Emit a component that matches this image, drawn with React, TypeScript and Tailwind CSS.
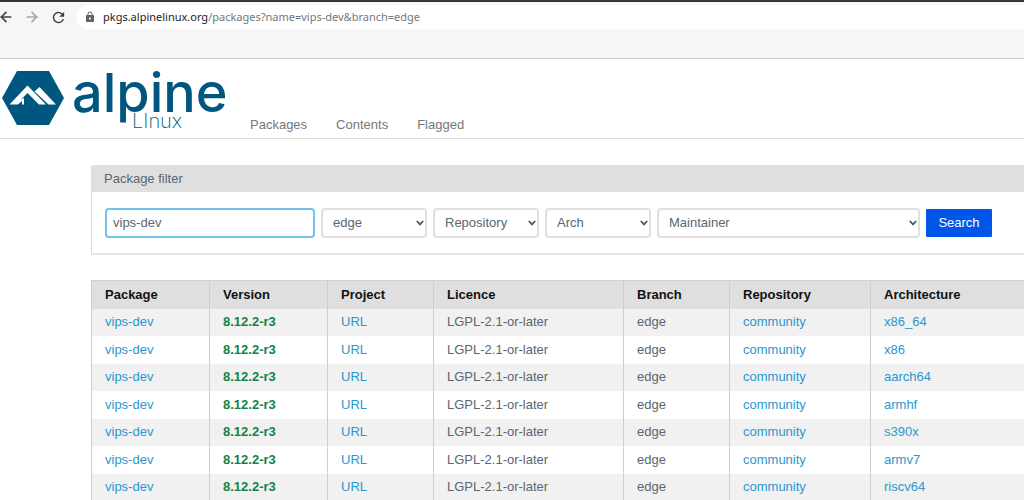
import { ArrowLeft, ArrowRight } from "lucide-react";
import { MdLock, MdRefresh } from "react-icons/md";

const navItems = ["Packages", "Contents", "Flagged"];

const columns = [
  { name: "Package", width: "w-[118px]" },
  { name: "Version", width: "w-[118px]" },
  { name: "Project", width: "w-[106px]" },
  { name: "Licence", width: "w-[190px]" },
  { name: "Branch", width: "w-[106px]" },
  { name: "Repository", width: "w-[141px]" },
  { name: "Architecture", width: "" },
];

const architectures = ["x86_64", "x86", "aarch64", "armhf", "s390x", "armv7", "riscv64"];

type FilterSelectProps = {
  label: string;
  value: string;
  className: string;
};

function FilterSelect({ label, value, className }: FilterSelectProps) {
  return (
    <div className={`relative ${className}`}>
      <select
        aria-label={label}
        className="h-[30px] w-full appearance-none rounded-[4px] border-2 border-[#e0e0e0] bg-white pl-[10px] pr-5 text-[13px] text-[#5b666e]"
      >
        <option>{value}</option>
      </select>
      <svg
        viewBox="0 0 8 6"
        className="pointer-events-none absolute right-[3px] top-3 h-[6px] w-2"
        fill="none"
        stroke="#4a555f"
        strokeWidth="1.8"
      >
        <path d="M0.8 1 L4 4.4 L7.2 1" />
      </svg>
    </div>
  );
}

function BrowserBar() {
  return (
    <div className="h-[59px] border-b border-t-2 border-b-[#cfcfcf] border-t-[#3a3435] bg-[#f6f6f6] pt-[3px]">
      <div className="flex items-center">
        <div className="flex w-[76px] items-center gap-[10px] text-[#3f4346]">
          <button aria-label="Back" className="-ml-0.5">
            <ArrowLeft className="h-4 w-4" strokeWidth={2.6} />
          </button>
          <button aria-label="Forward" className="text-[#a3a7a9]">
            <ArrowRight className="h-4 w-4" strokeWidth={2.6} />
          </button>
          <button aria-label="Reload">
            <MdRefresh className="h-[17px] w-[17px]" />
          </button>
        </div>
        <div className="flex h-6 flex-1 items-center gap-[7px] rounded-l-full bg-white pl-2 font-['Noto_Sans',sans-serif] text-[11px] text-[#73777a]">
          <MdLock className="h-3 w-3 text-[#5f6367]" />
          <span className="whitespace-nowrap">
            <span className="text-[#222426]">pkgs.alpinelinux.org</span>/packages?name=vips-dev&amp;branch=edge
          </span>
        </div>
      </div>
    </div>
  );
}

function Logo() {
  return (
    <a href="#" className="flex font-['Inter',sans-serif] text-[#00567f]" aria-label="Alpine Linux">
      <svg viewBox="0 0 62 54" className="mt-3 h-[54px] w-[62px]">
        <path d="M15 0 H47 L62 27 L47 54 H15 L0 27 Z" fill="currentColor" />
        <path
          d="M7.5 33.5 L25.5 14.5 L44 33.5 H37 L25.5 22 L19 28.5 L22 27 V33.5 H20 V30 L16 33.5 Z"
          fill="#fff"
        />
        <path d="M32.5 20.5 L37.5 16 L54 33.5 H46.5 L37.5 25 Z" fill="#fff" />
      </svg>
      <span className="relative ml-2 block w-[155px] text-[54px] font-medium leading-[68px]">
        alpine
        <span className="absolute left-[60px] top-[52px] text-[20px] font-extralight leading-5">LInux</span>
      </span>
    </a>
  );
}

export default function App() {
  return (
    <div className="h-screen overflow-hidden bg-white font-['Liberation_Sans',Arial,sans-serif] text-[13px] text-[#5b666e]">
      <BrowserBar />

      <header className="flex h-20 border-b border-[#dcdcdc] pl-0.5">
        <Logo />
        <nav className="ml-[23px] mt-[58px] flex gap-[29px] leading-4">
          {navItems.map((item) => (
            <a key={item} href="#" className="text-[#777777]">
              {item}
            </a>
          ))}
        </nav>
      </header>

      <main className="pl-[91px] pt-[26px]">
        <section className="rounded-tl-[3px] border-b-2 border-l border-b-[#e6e6e6] border-l-[#dcdcdc]">
          <h2 className="rounded-tl-[3px] bg-[#dfdfdf] px-3 leading-[27px]">Package filter</h2>
          <form
            className="flex items-center gap-1.5 px-[13px] pb-[15px] pt-4"
            onSubmit={(e) => e.preventDefault()}
          >
            <input
              type="text"
              aria-label="Package name"
              defaultValue="vips-dev"
              className="h-[30px] w-[210px] rounded-[4px] border-2 border-[#72c4ec] bg-white px-[6px] pb-px outline-none"
            />
            <FilterSelect label="Branch" value="edge" className="w-[106px]" />
            <FilterSelect label="Repository" value="Repository" className="w-[106px]" />
            <FilterSelect label="Arch" value="Arch" className="w-[106px]" />
            <FilterSelect label="Maintainer" value="Maintainer" className="w-[263px]" />
            <button type="submit" className="h-7 w-[66px] rounded-[1px] bg-[#0057e7] text-white">
              Search
            </button>
          </form>
        </section>

        <table className="mt-[25px] w-full table-fixed border-collapse border-l border-t border-[#cfcfcf] text-left">
          <thead>
            <tr className="h-7 bg-[#dfdfdf] text-[#111111]">
              {columns.map((column) => (
                <th
                  key={column.name}
                  className={`border-r border-[#cfcfcf] py-0 pl-[13px] font-bold last:border-r-0 ${column.width}`}
                >
                  {column.name}
                </th>
              ))}
            </tr>
          </thead>
          <tbody className="[&_a]:text-[#2b97cf] [&_td]:border-r [&_td]:border-[#cfcfcf] [&_td]:pl-[13px] [&_td:last-child]:border-r-0">
            {architectures.map((arch) => (
              <tr key={arch} className="h-[27px] odd:bg-[#f1f1f1] even:h-7">
                <td>
                  <a href="#">vips-dev</a>
                </td>
                <td className="font-bold text-[#128347]">8.12.2-r3</td>
                <td>
                  <a href="#">URL</a>
                </td>
                <td>LGPL-2.1-or-later</td>
                <td>edge</td>
                <td>
                  <a href="#">community</a>
                </td>
                <td>
                  <a href="#">{arch}</a>
                </td>
              </tr>
            ))}
          </tbody>
        </table>
      </main>
    </div>
  );
}
